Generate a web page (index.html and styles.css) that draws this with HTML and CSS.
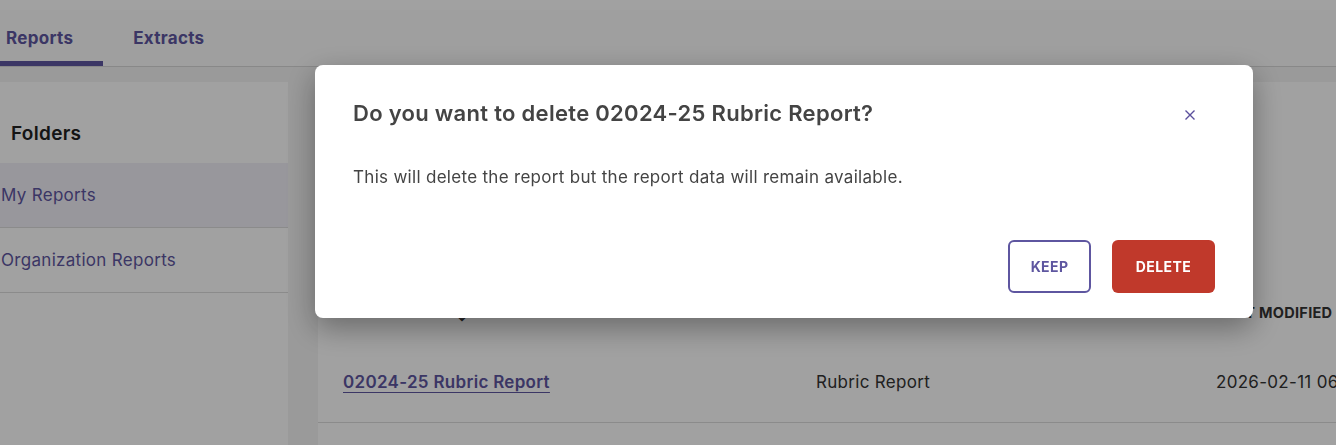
FILE: index.html
```html
<!DOCTYPE html>
<html>
<head>
  <meta charset="UTF-8">
  <meta name="viewport" content="width=device-width, initial-scale=1">
  <title>Reports</title>
  <link rel="stylesheet" href="styles.css">
</head>
<body>

<div class="topstrip"></div>

<nav class="tabs">
  <a class="tab active" href="#">Reports</a>
  <a class="tab" href="#">Extracts</a>
</nav>

<div class="content">
  <aside class="sidebar">
    <h2 class="folders-title">Folders</h2>
    <a class="folder selected" href="#">My Reports</a>
    <a class="folder" href="#">Organization Reports</a>
  </aside>

  <main class="reports">
    <div class="reports-top"></div>
    <div class="table-head">
      <span class="col-name">Report Name &#8597;</span>
      <span class="col-type">Report Type</span>
      <span class="col-date">Last Modified</span>
    </div>
    <div class="table-row">
      <span class="col-name"><a class="report-link" href="#">02024-25 Rubric Report</a></span>
      <span class="col-type">Rubric Report</span>
      <span class="col-date">2026-02-11 06:42 PM</span>
    </div>
  </main>
</div>

<div class="overlay">
  <div class="modal">
    <div class="modal-head">
      <h3>Do you want to delete 02024-25 Rubric Report?</h3>
      <button class="close" aria-label="Close">
        <svg width="12" height="12" viewBox="0 0 12 12"><path d="M1.5 1.5 L10.5 10.5 M10.5 1.5 L1.5 10.5" stroke="#5a4f9c" stroke-width="1.4" fill="none"/></svg>
      </button>
    </div>
    <p class="modal-text">This will delete the report but the report data will remain available.</p>
    <div class="modal-actions">
      <button class="btn keep">Keep</button>
      <button class="btn delete">Delete</button>
    </div>
  </div>
</div>

</body>
</html>
```

FILE: styles.css
```css
body{
  margin: 0;
  background: #f4f4f4;
  font-family: Inter, "Noto Sans", sans-serif;
  letter-spacing: 0.3px;
  color: #333;
  overflow: hidden;
  height: 445px;
}

a{
  text-decoration: none;
}

.topstrip{
  height: 10px;
  background: #fff;
}

.tabs{
  display: flex;
  height: 56px;
  margin-left: -24px;
  background: #fcfcfc;
  border-bottom: 1px solid #d8d8d8;
}

.tab{
  display: flex;
  align-items: center;
  padding: 5px 30px 0;
  font-size: 17px;
  font-weight: 700;
  color: #5e56a0;
  border-bottom: 5px solid transparent;
}

.tab.active{
  border-bottom-color: #5e56a0;
}

.content{
  display: flex;
  gap: 30px;
  padding-top: 15px;
}

.sidebar{
  width: 288px;
  flex: none;
  background: #fff;
  height: 400px;
}

.folders-title{
  margin: 0;
  padding: 40px 0 18px 11px;
  font-size: 19px;
  font-weight: 600;
  color: #222;
}

.folder{
  display: flex;
  align-items: center;
  height: 64px;
  padding-left: 1px;
  font-size: 17px;
  color: #5e56a0;
  border-bottom: 1px solid #dcdcdc;
}

.folder.selected{
  background: #f1eff8;
}

.reports{
  flex: 1;
  background: #fff;
  height: 400px;
}

.reports-top{
  height: 201px;
}

.table-head,
.table-row{
  display: flex;
  padding-left: 25px;
}

.table-head{
  height: 59px;
  align-items: center;
  font-size: 14.5px;
  font-weight: 700;
  text-transform: uppercase;
  color: #333;
}

.table-row{
  height: 80px;
  align-items: center;
  font-size: 17px;
  border-bottom: 1px solid #dcdcdc;
}

.col-name{
  width: 473px;
  flex: none;
}

.col-type{
  width: 400px;
  flex: none;
}

.col-date{
  white-space: nowrap;
}

.report-link{
  color: #5e56a0;
  font-weight: 600;
  text-decoration: underline;
  text-underline-offset: 4px;
}

.overlay{
  position: fixed;
  inset: 0;
  background: rgba(0, 0, 0, 0.37);
  padding: 65px 0 0 315px;
}

.modal{
  width: 938px;
  height: 253px;
  box-sizing: border-box;
  background: #fff;
  border-radius: 8px;
  box-shadow: 0 10px 30px rgba(0, 0, 0, 0.35);
  padding: 0 38px;
}

.modal-head{
  display: flex;
  justify-content: space-between;
  align-items: center;
  padding-top: 35px;
}

.modal-head h3{
  margin: 0;
  font-size: 22px;
  font-weight: 600;
  color: #444;
}

.close{
  border: none;
  background: none;
  padding: 0;
  width: 12px;
  height: 12px;
  margin-right: 19px;
  margin-top: 4px;
  display: flex;
}

.modal-text{
  margin: 41px 0 0;
  font-size: 17px;
  color: #444;
}

.modal-actions{
  display: flex;
  justify-content: flex-end;
  gap: 21px;
  margin-top: 53px;
}

.btn{
  height: 53px;
  border-radius: 6px;
  font-family: Inter, "Noto Sans", sans-serif;
  font-size: 14px;
  font-weight: 700;
  text-transform: uppercase;
  letter-spacing: 0.4px;
}

.keep{
  width: 83px;
  background: #fff;
  color: #5e56a0;
  border: 2px solid #5e56a0;
}

.delete{
  width: 103px;
  background: #c0392b;
  color: #fff;
  border: none;
}
```
